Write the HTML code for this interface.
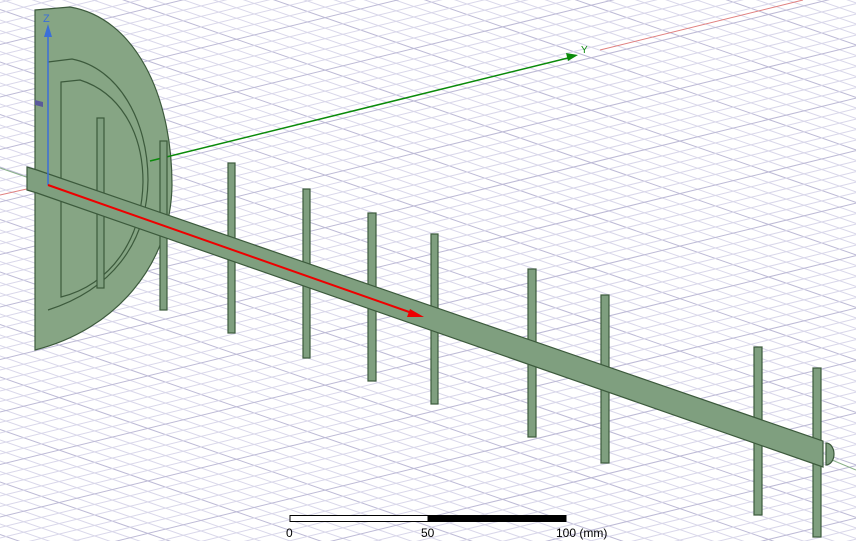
<!DOCTYPE html>
<html><head><meta charset="utf-8"><style>
html,body{margin:0;padding:0;background:#fff;width:856px;height:541px;overflow:hidden;}
svg{display:block;}
text{font-family:"Liberation Sans",sans-serif;}
</style></head><body>
<svg id="s" width="856" height="541" viewBox="0 0 856 541" xmlns="http://www.w3.org/2000/svg">
<g id="grid" stroke-width="1" fill="none"></g>
<line x1="0" y1="195" x2="40" y2="186" stroke="#e08080" stroke-width="1"/>
<line x1="600" y1="50" x2="803" y2="0" stroke="#e08080" stroke-width="1"/>
<line x1="0" y1="168" x2="35" y2="180" stroke="#88b088" stroke-width="1"/>
<line x1="832" y1="460" x2="856" y2="470" stroke="#88b088" stroke-width="1"/>
<g stroke="#3c5a3c" stroke-width="1.2" fill="#7f9f7f">
<path d="M35,10 L70,7 C135,18 172,95 172,185 C171,265 115,330 35,350 Z" fill="#86a584"/>
<path d="M48,62 L72,59 C118,68 148,120 148,180 C147,245 110,290 48,310" fill="none"/>
<path d="M61,82 L80,80 C118,92 143,130 143,182 C142,240 110,285 61,297 Z" fill="none"/>
<rect x="97" y="118" width="7" height="170"/>
</g>
<line x1="150" y1="161" x2="572" y2="57" stroke="#0a8a0a" stroke-width="1.5"/>
<polygon points="578,55 566,53 568,61" fill="#0a8a0a"/>
<text x="581" y="53" font-size="10" fill="#0a8a0a">Y</text>
<g stroke="#3c5a3c" stroke-width="1.2" fill="#7f9f7f">
<rect x="160" y="141" width="7" height="169"/>
<rect x="228" y="163" width="7" height="170"/>
<rect x="303" y="189" width="7" height="169"/>
<rect x="368" y="213" width="8" height="168"/>
<rect x="431" y="234" width="7" height="170"/>
<rect x="528" y="269" width="8" height="168"/>
<rect x="601" y="295" width="8" height="168"/>
<rect x="754" y="347" width="8" height="168"/>
<rect x="813" y="368" width="8" height="169"/>
<path d="M826,443 A8,11 0 0 1 826,465 Z" />
<polygon points="27,167 37,170 823,441 823,467 37,193 27,190"/>
</g>
<line x1="48" y1="185" x2="48" y2="32" stroke="#3b6fd8" stroke-width="1.5"/>
<polygon points="48,24 44,37 52,37" fill="#3b6fd8"/>
<text x="43" y="22" font-size="11" fill="#3b6fd8">Z</text>
<path d="M35,100 l8,2 l0,5 l-8,-2z" fill="#5a5a9a"/>
<line x1="48" y1="185" x2="412" y2="313" stroke="#ee0000" stroke-width="2"/>
<polygon points="424,317 410,309 407,317" fill="#ee0000"/>
<rect x="290" y="515.5" width="138" height="6" fill="#fff" stroke="#000" stroke-width="1"/>
<rect x="428" y="515.5" width="138" height="6" fill="#000" stroke="#000" stroke-width="1"/>
<text x="286" y="537" font-size="12" fill="#000">0</text>
<text x="421" y="537" font-size="12" fill="#000">50</text>
<text x="556" y="537" font-size="12" fill="#000">100 (mm)</text>
</svg>
<script>
var g=document.getElementById('grid'),ns='http://www.w3.org/2000/svg';
function L(x1,y1,x2,y2,c){var l=document.createElementNS(ns,'line');l.setAttribute('x1',x1);l.setAttribute('y1',y1);l.setAttribute('x2',x2);l.setAttribute('y2',y2);l.setAttribute('stroke',c);g.appendChild(l);}
var i=0;
for(var b=-400;b<900;b+=10.5){i++;L(0,b,856,b+856*0.348,i%5==0?'#bdbad6':'#d9d7ea');}
i=0;
for(var b=-50;b<800;b+=10.5){i++;L(0,b,856,b-856*0.244,i%5==0?'#bdbad6':'#d9d7ea');}
</script>
</body></html>
